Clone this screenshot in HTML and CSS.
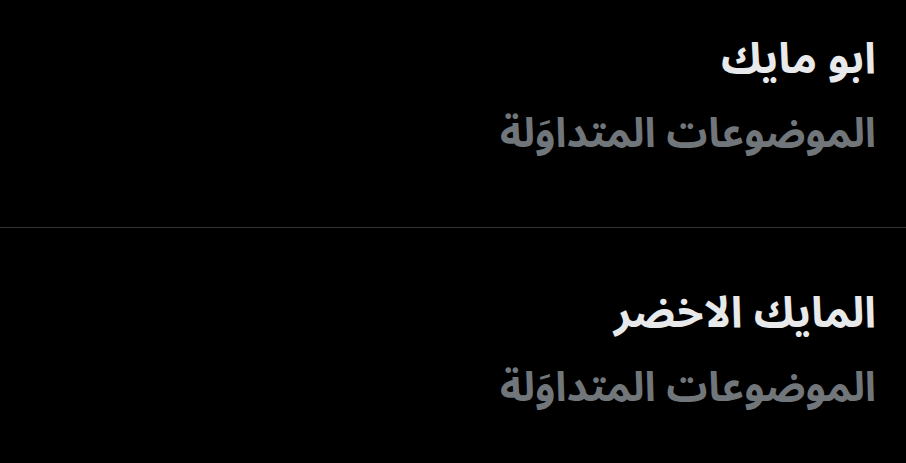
FILE: index.html
```html
<!DOCTYPE html>
<html lang="ar" dir="rtl">
<head>
<meta charset="utf-8">
<link rel="stylesheet" href="styles.css">
</head>
<body>
<div class="list">
  <div class="item first">
    <div class="title">ابو مايك</div>
    <div class="sub">الموضوعات المتداوَلة</div>
  </div>
  <div class="divider"></div>
  <div class="item">
    <div class="title">المايك الاخضر</div>
    <div class="sub">الموضوعات المتداوَلة</div>
  </div>
</div>
</body>
</html>
```
FILE: styles.css
```css
html, body {
  margin: 0;
  padding: 0;
  background: #000;
  width: 906px;
  height: 463px;
  overflow: hidden;
}
body {
  font-family: "Noto Sans Arabic", "Noto Sans Arabic UI", "DejaVu Sans", sans-serif;
}
.list {
  display: flex;
  flex-direction: column;
  padding-left: 28px;
}
.item {
  display: flex;
  flex-direction: column;
  padding: 48px 30px 0 0;
  box-sizing: border-box;
}
.item.first {
  padding-top: 22px;
  height: 227px;
}
.title {
  color: #e7e9ea;
  font-size: 43px;
  font-weight: bold;
  line-height: 75px;
}
.sub {
  color: #71767b;
  font-size: 41px;
  font-weight: bold;
  line-height: 75px;
}
.divider {
  height: 1px;
  background: #2f3336;
  margin-left: -28px;
}
```
